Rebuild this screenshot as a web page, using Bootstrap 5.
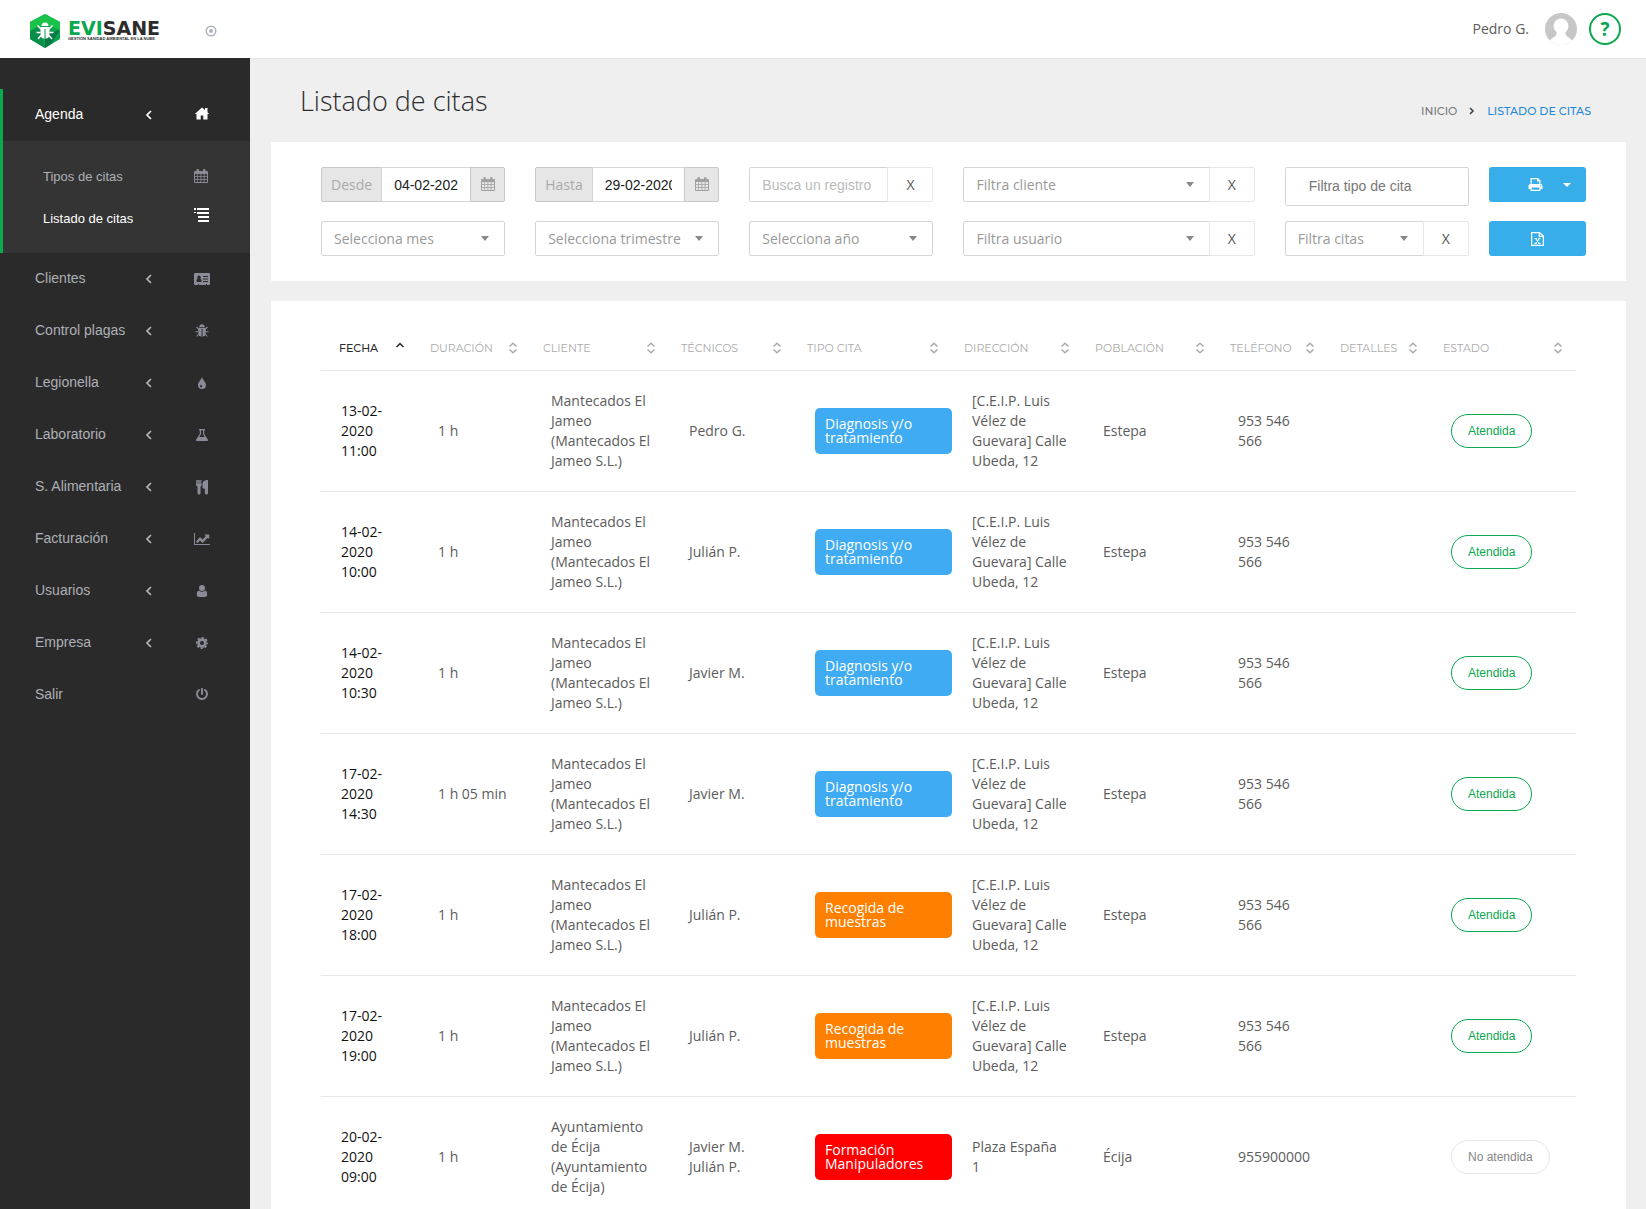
<!DOCTYPE html>
<html lang="es">
<head>
<meta charset="utf-8">
<meta name="viewport" content="width=device-width, initial-scale=1">
<title>Evisane - Listado de citas</title>
<link href="https://cdn.jsdelivr.net/npm/bootstrap@5.3.0/dist/css/bootstrap.min.css" rel="stylesheet">
<style>
body{font-family:"Segoe UI","Open Sans","Noto Sans",sans-serif;font-size:14px;line-height:20px;color:#5c5c5c;background:#efefef}
svg{display:block;flex:none}
.ev-top{height:58px;padding:0 25px 0 30px}
.ev-brand{width:147px;color:#2c2c2c}
.ev-name{font:bold 19px/16px "DejaVu Sans",sans-serif}
.ev-name span{color:#0aa84f}
.ev-tag{font:bold 4px/6px "Liberation Sans",sans-serif}
.ev-help{width:32px;height:32px;border:2px solid #0aa84f;color:#0aa84f;margin-left:12px;font:bold 19px/28px "Open Sans",sans-serif}
.ev-side{width:250px;background:#2a2a2a;padding-top:31px;font-family:"Liberation Sans",Arial,sans-serif}
.ev-side a{height:52px;padding:0 33px 0 35px;color:#adb0b6;text-decoration:none}
.ev-side a>span{padding-bottom:2px}
.ev-side a>svg{color:#8b8b97}
.ev-side a>.ev-chev{color:#b4b6bb;margin-right:33px}
.ev-side .ev-open{box-shadow:inset 3px 0 #0aa84f}
.ev-side .ev-sub{background:#343434;padding:14px 0;margin-left:3px}
.ev-side .ev-sub a{height:42px;font-size:13px;padding-left:40px}
.ev-side .ev-sub a>span{padding:2px 0 0}
.ev-side a.ev-on,.ev-side a.ev-on>svg{color:#fff}
.ev-main{padding:0 20px 0 21px;border-top:1px solid #e6e6e6}
.ev-head{height:83px;padding:0 35px 0 29px}
.ev-head h1{font-size:27px;font-weight:300;line-height:36px;color:#2c2c2c}
.ev-crumbs{font:500 11px/16px Montserrat,Inter,sans-serif;padding-top:20px}
.ev-crumbs a{color:#777;text-decoration:none}
.ev-crumbs .ev-here{color:#1e88d6}
.ev-panel{padding:25px 50px}
.ev-panel+.ev-panel{margin-top:20px}
.ev-filters{--bs-gutter-x:30px;--bs-gutter-y:15px}
.ev-filters>.ev-tight{padding:0 5px}
.ev-filters .form-control,.ev-filters .form-select,.ev-filters .input-group-text,.ev-filters .btn{height:35px;font-size:14px;line-height:20px;border-radius:2px;box-shadow:none}
.ev-filters .form-control{padding:0 12px;border-color:#d5d5d5;color:#222;font-family:"Liberation Sans",Arial,sans-serif}
.ev-filters .form-control::placeholder{color:#bbb}
.ev-filters .ev-tall{height:39px;padding:0 23px 2px}
.ev-filters .ev-tall::placeholder{color:#777}
.ev-filters .form-select{padding:0 30px 0 12px;border-color:#d5d5d5;color:#999;background:#fff url("data:image/svg+xml,%3Csvg xmlns='http://www.w3.org/2000/svg' width='8' height='5'%3E%3Cpath d='M0 0h8L4 5z' fill='%23888'/%3E%3C/svg%3E") no-repeat right 15px center/8px 5px}
.ev-filters .input-group-text{background:#e6e6e6;border-color:#c8c8c8;color:#aaa;padding:0 9px}
.ev-filters .ev-cal{width:35px;padding:0;border:1px solid #c8c8c8;background:#e6e6e6;color:#a0a0a0}
.ev-filters .ev-clear{width:46px;padding:0;border:1px solid #e6e6e6;background:#fff;color:#555}
.ev-filters .ev-blue{background:#37aeea;border:0;color:#fff;border-radius:3px}
.ev-table{table-layout:fixed;border-collapse:separate;border-spacing:0}
.ev-table th{height:45px;padding:0 7px 0 18px;border-bottom:1px solid #e6e6e6;font:400 11px/16px Montserrat,Inter,sans-serif;color:#aaa;vertical-align:middle}
.ev-table th:last-child{padding-right:13px}
.ev-table th.ev-sorted{color:#2c2c2c;font-weight:500}
.ev-table td{height:121px;padding:20px 6px 20px 26px;border-bottom:1px solid #e6e6e6;vertical-align:middle}
.ev-table td:first-child{padding-left:20px;color:#111}
.ev-kind{width:137px;padding:9px 10px;border-radius:5px;line-height:14px;color:#fff;font-weight:500}
.ev-diag{background:#3fabf3}.ev-samp{background:#ff8000}.ev-form{background:#f00}
.ev-table .ev-state{height:34px;padding:0 16px;border-radius:17px;font:12px/18px "Liberation Sans",Arial,sans-serif;border:1px solid #0aa84f;color:#0aa84f;background:#fff}
.ev-table .ev-pending{border-color:#e6e6e6;color:#888}
</style>
<script src="https://cdn.jsdelivr.net/npm/bootstrap@5.3.0/dist/js/bootstrap.bundle.min.js"></script>
</head>
<body class="vh-100 overflow-hidden d-flex flex-column">
<svg width="0" height="0" class="position-absolute" aria-hidden="true">
  <symbol id="chev" viewBox="0 0 10 12"><path d="M7 2 3 6l4 4" fill="none" stroke="currentColor" stroke-width="1.7"/></symbol>
  <symbol id="sort" viewBox="0 0 10 12"><path d="M1.500 4.500 5 1.200l3.500 3.300M1.500 7.500 5 10.800l3.500-3.300" fill="none" stroke="#aaa" stroke-width="1.500"/></symbol>
  <symbol id="cal" viewBox="0 0 14 15"><path fill="currentColor" fill-rule="evenodd" d="M1 2h1.500V1a1 1 0 0 1 1-1h.5a1 1 0 0 1 1 1v1h4V1a1 1 0 0 1 1-1h.5a1 1 0 0 1 1 1v1H13a1 1 0 0 1 1 1v10a1 1 0 0 1-1 1H1a1 1 0 0 1-1-1V3a1 1 0 0 1 1-1zM1 5v2h2.300V5zm3 0v2h2.500V5zm3.300 0v2h2.400V5zm3.200 0v2H13V5zM1 7.700V10h2.300V7.700zm3 0V10h2.500V7.700zm3.300 0V10h2.400V7.700zm3.200 0V10H13V7.700zM1 10.700V13h2.300v-2.300zm3 0V13h2.500v-2.300zm3.300 0V13h2.400v-2.300zm3.200 0V13H13v-2.300z"/></symbol>
  <symbol id="bug" viewBox="0 0 14 14"><path fill="currentColor" d="M4.300 3a2.700 2.700 0 0 1 5.400 0z"/><path fill="currentColor" d="M3.300 3.700h7.400v5.300a3.500 3.500 0 0 1-3.200 3.700V5h-1v7.700A3.500 3.500 0 0 1 3.300 9z"/><path stroke="currentColor" stroke-width="1.100" fill="none" d="M4 5.500 1.500 3M10 5.500 12.500 3M3.500 7.800H.5M10.500 7.800h3M4 10l-2.300 2.500M10 10l2.300 2.500"/></symbol>
</svg>

<header class="ev-top bg-white d-flex align-items-center flex-shrink-0">
  <a class="ev-brand d-flex align-items-center gap-2 pt-1 text-decoration-none" href="#">
    <svg width="30" height="34" viewBox="0 0 30 34"><path d="M15 0 30 8v17L15 34 0 25V8z" fill="#0ba34b"/><path d="M15 0 30 8v8L15 10 0 17V8z" fill="#19c34a"/><path d="m30 16-9 14-6 4V20z" fill="#067a45"/><path d="M0 17l9-5 6 22L0 25z" fill="#0b8d4b"/><g fill="#fff"><path d="M11.500 12a3.500 3.500 0 0 1 7 0z"/><path d="M10.500 13h9v7a4.500 4.500 0 0 1-4 4.700V15h-1v9.700a4.500 4.500 0 0 1-4-4.700z"/></g><path d="m11 15-3.500-3.500M19 15l3.500-3.500M10.500 18.500H6.500M19.500 18.500h4M11 21.500 8 25M19 21.500l3 3.500" stroke="#fff" stroke-width="1.500"/></svg>
    <span class="d-flex flex-column text-nowrap"><span class="ev-name"><span>EVI</span>SANE</span><small class="ev-tag">GESTIÓN SANIDAD AMBIENTAL EN LA NUBE</small></span>
  </a>
  <button class="btn p-0 pt-1 border-0 ms-4 ps-1" type="button" aria-label="Fijar menú"><svg width="12" height="12" viewBox="0 0 12 12"><circle cx="6" cy="6" r="4.800" fill="none" stroke="#aeb0bd" stroke-width="1.400"/><circle cx="6" cy="6" r="2" fill="#aeb0bd"/></svg></button>
  <span class="ms-auto me-3">Pedro G.</span>
  <svg width="32" height="32" viewBox="0 0 32 32"><clipPath id="av"><circle cx="16" cy="16" r="16"/></clipPath><g clip-path="url(#av)"><path fill="#c7c7c7" d="M0 0h32v32H0z"/><circle cx="16" cy="13" r="7.500" fill="#fff"/><path fill="#fff" d="M4 29c2-4 6-5 7.500-7.500V17h9v4.500C22 24 26 25 28 29v3H4z"/></g></svg>
  <button class="ev-help btn rounded-circle p-0" type="button" aria-label="Ayuda">?</button>
</header>

<div class="d-flex flex-grow-1 overflow-hidden">
  <nav class="ev-side flex-shrink-0">
    <div class="ev-open">
      <a href="#" class="ev-on d-flex align-items-center"><span class="flex-grow-1">Agenda</span><svg class="ev-chev text-white" width="10" height="12"><use href="#chev"/></svg><svg width="30" height="16" viewBox="-8 1 30 16"><path fill="currentColor" d="M7 1.500 10 4V2h2.500v4.200L14.200 8H12.500v5.500H8.300V9.500H5.700v4H1.500V8H-.2z"/></svg></a>
      <div class="ev-sub">
        <a href="#" class="d-flex align-items-center"><span class="flex-grow-1">Tipos de citas</span><svg width="30" height="15" viewBox="-7 0 30 15"><use href="#cal" width="14" height="15"/></svg></a>
        <a href="#" class="ev-on d-flex align-items-center"><span class="flex-grow-1">Listado de citas</span><svg width="30" height="20" viewBox="-7 0 30 20"><path fill="currentColor" d="M0 0h2v2H0zm3 0h12v2H3zM3 4h12v2H3zM4 8h11v2H4zM4 12h11v2H4zM0 4h2v1H0z"/></svg></a>
      </div>
    </div>
    <a href="#" class="d-flex align-items-center"><span class="flex-grow-1">Clientes</span><svg class="ev-chev" width="10" height="12"><use href="#chev"/></svg><svg width="30" height="14" viewBox="-7 0 30 14"><path fill="currentColor" fill-rule="evenodd" d="M1 1h14a1 1 0 0 1 1 1v10a1 1 0 0 1-1 1h-2v-1h-1v1H5v-1H4v1H1a1 1 0 0 1-1-1V2a1 1 0 0 1 1-1zm1.500 9h5V8.500c0-1-.8-1.700-1.300-1.700a1.800 1.800 0 1 0-2.400 0c-.5 0-1.300.7-1.300 1.700zM9 4v1h5V4zm0 2.500v1h5v-1zM9 9v1h5V9z"/></svg></a>
    <a href="#" class="d-flex align-items-center"><span class="flex-grow-1">Control plagas</span><svg class="ev-chev" width="10" height="12"><use href="#chev"/></svg><svg width="30" height="14" viewBox="-8 0 30 14"><use href="#bug" width="14" height="14"/></svg></a>
    <a href="#" class="d-flex align-items-center"><span class="flex-grow-1">Legionella</span><svg class="ev-chev" width="10" height="12"><use href="#chev"/></svg><svg width="30" height="14" viewBox="-8 0 30 14"><path fill="currentColor" fill-rule="evenodd" d="M7 1c.7 3 4 5 4 8a4 4 0 0 1-8 0c0-3 3.300-5 4-8zM6 8.500c-.3.800-1 1.200-1 1.800a1.100 1.100 0 0 0 2.200 0c0-.6-.9-1-1.200-1.800z"/></svg></a>
    <a href="#" class="d-flex align-items-center"><span class="flex-grow-1">Laboratorio</span><svg class="ev-chev" width="10" height="12"><use href="#chev"/></svg><svg width="30" height="14" viewBox="-8 0 30 14"><path fill="currentColor" fill-rule="evenodd" d="M4 1h6v1.200H9.200V6L12.800 11.500c.5.900.1 1.500-.8 1.500H2c-.9 0-1.300-.6-.8-1.500L4.800 6V2.200H4zm2 1.200v4L4.300 9h5.400L8 6.200v-4z"/></svg></a>
    <a href="#" class="d-flex align-items-center"><span class="flex-grow-1">S. Alimentaria</span><svg class="ev-chev" width="10" height="12"><use href="#chev"/></svg><svg width="30" height="16" viewBox="-8 0 30 16"><path fill="currentColor" opacity=".75" d="M1 1h5.500v5H1z"/><path fill="currentColor" d="M1 5h5.500v1c0 .8-.6 1.200-1 1.500V14a1 1 0 0 1-3 0V7.500C2 7 1 6.500 1 6zM13 1v13a1 1 0 0 1-3.200 0V9.500H7.500V5c0-2.500 2-4 5.500-4z"/></svg></a>
    <a href="#" class="d-flex align-items-center"><span class="flex-grow-1">Facturación</span><svg class="ev-chev" width="10" height="12"><use href="#chev"/></svg><svg width="30" height="14" viewBox="-7 0 30 14"><path fill="currentColor" d="M0 1h1v11h15v1H0zM2 9.500 6 5l2.500 2.500 3.300-3.300L10.500 2.500h4.700v4.500l-1.500-1.300L8.500 11 6 8.500l-2.500 2.700z"/></svg></a>
    <a href="#" class="d-flex align-items-center"><span class="flex-grow-1">Usuarios</span><svg class="ev-chev" width="10" height="12"><use href="#chev"/></svg><svg width="30" height="14" viewBox="-8 0 30 14"><circle cx="7" cy="4" r="3" fill="currentColor"/><path fill="currentColor" d="M4 6.500c.8.800 1.800 1.200 3 1.200s2.200-.4 3-1.200c1.500.2 2.200 2 2.200 4 0 1.500-.8 2.500-2 2.500H3.800c-1.200 0-2-1-2-2.500 0-2 .7-3.800 2.200-4z"/></svg></a>
    <a href="#" class="d-flex align-items-center"><span class="flex-grow-1">Empresa</span><svg class="ev-chev" width="10" height="12"><use href="#chev"/></svg><svg width="30" height="14" viewBox="-8 0 30 14"><circle cx="7" cy="7" r="3.400" fill="none" stroke="currentColor" stroke-width="2.800"/><circle cx="7" cy="7" r="5.200" fill="none" stroke="currentColor" stroke-width="1.800" stroke-dasharray="2.200 1.884" stroke-dashoffset="1.100"/></svg></a>
    <a href="#" class="d-flex align-items-center"><span class="flex-grow-1">Salir</span><svg width="30" height="14" viewBox="-8 1 30 14"><path fill="none" stroke="currentColor" stroke-width="1.900" stroke-linecap="round" d="M7 1.800V7M4 3a5 5 0 1 0 6 0"/></svg></a>
  </nav>

  <main class="ev-main flex-grow-1">
    <div class="ev-head d-flex justify-content-between align-items-center">
      <h1 class="m-0">Listado de citas</h1>
      <nav class="ev-crumbs d-flex align-items-center gap-2" aria-label="Ruta"><a href="#">INICIO</a><svg class="mx-1" width="6" height="8" viewBox="0 0 6 8"><path d="m1 1 3 3-3 3" fill="none" stroke="#444" stroke-width="1.600"/></svg><a class="ev-here" href="#">LISTADO DE CITAS</a></nav>
    </div>

    <section class="ev-panel bg-white">
      <form class="ev-filters row align-items-start">
        <div class="col-2"><div class="input-group flex-nowrap"><label class="input-group-text" for="desde">Desde</label><input class="form-control" id="desde" value="04-02-2020"><button class="ev-cal btn d-flex align-items-center justify-content-center" type="button" aria-label="Calendario desde"><svg width="14" height="15"><use href="#cal"/></svg></button></div></div>
        <div class="col-2"><div class="input-group flex-nowrap"><label class="input-group-text" for="hasta">Hasta</label><input class="form-control" id="hasta" value="29-02-2020"><button class="ev-cal btn d-flex align-items-center justify-content-center" type="button" aria-label="Calendario hasta"><svg width="14" height="15"><use href="#cal"/></svg></button></div></div>
        <div class="col-2"><div class="input-group flex-nowrap"><input class="form-control" placeholder="Busca un registro" aria-label="Busca un registro"><button class="ev-clear btn" type="button">X</button></div></div>
        <div class="col-3"><div class="input-group flex-nowrap"><select class="form-select" aria-label="Cliente"><option>Filtra cliente</option></select><button class="ev-clear btn" type="button">X</button></div></div>
        <div class="col-2"><input class="ev-tall form-control" placeholder="Filtra tipo de cita" aria-label="Filtra tipo de cita"></div>
        <div class="ev-tight col-1"><button class="ev-blue btn w-100 d-flex align-items-center justify-content-center gap-3" type="button" aria-label="Imprimir"><svg class="ms-4" width="15" height="13" viewBox="0 0 14 13"><path fill="#fff" fill-rule="evenodd" d="M2 0h7.500L12 2.500V6a2 2 0 0 1 2 2v3h-2v2H2v-2H0V8a2 2 0 0 1 2-2zm1.200 1.200V6h7.600V3.500H8.500V1.200zM3.200 9.500v2.300h7.600V9.500zM12 7.300a.6.600 0 1 0 .1 0z"/></svg><svg class="ms-1" width="8" height="4" viewBox="0 0 8 4"><path d="M0 0h8L4 4z" fill="#fff"/></svg></button></div>
        <div class="col-2"><select class="form-select" aria-label="Mes"><option>Selecciona mes</option></select></div>
        <div class="col-2"><select class="form-select" aria-label="Trimestre"><option>Selecciona trimestre</option></select></div>
        <div class="col-2"><select class="form-select" aria-label="Año"><option>Selecciona año</option></select></div>
        <div class="col-3"><div class="input-group flex-nowrap"><select class="form-select" aria-label="Usuario"><option>Filtra usuario</option></select><button class="ev-clear btn" type="button">X</button></div></div>
        <div class="col-2"><div class="input-group flex-nowrap"><select class="form-select" aria-label="Citas"><option>Filtra citas</option></select><button class="ev-clear btn" type="button">X</button></div></div>
        <div class="ev-tight col-1"><button class="ev-blue btn w-100 d-flex align-items-center justify-content-center" type="button" aria-label="Exportar a Excel"><svg width="13" height="14" viewBox="0 0 13 14"><path d="M.6.600h7.900l3.900 3.500v9.300H.6zM8.300.6v3.700h4" fill="none" stroke="#fff" stroke-width="1.200"/><path d="m4.500 6.500 4 5M8.500 6.500l-4 5M3.500 6.500h2.300M7.200 6.500h2.300M3.500 11.500h2.300M7.200 11.500h2.300" stroke="#fff" stroke-width="1.100"/></svg></button></div>
      </form>
    </section>

    <section class="ev-panel bg-white">
      <table class="ev-table w-100">
        <colgroup><col width="91"><col width="113"><col width="138"><col width="126"><col width="157"><col width="131"><col width="135"><col width="110"><col width="103"><col width="151"></colgroup>
        <thead><tr>
          <th class="ev-sorted"><div class="d-flex justify-content-between align-items-center">FECHA<svg width="10" height="12" viewBox="0 0 10 12"><path d="M1.500 5 5 1.700 8.500 5" fill="none" stroke="#333" stroke-width="1.600"/></svg></div></th>
          <th><div class="d-flex justify-content-between align-items-center">DURACIÓN<svg width="10" height="12"><use href="#sort"/></svg></div></th>
          <th><div class="d-flex justify-content-between align-items-center">CLIENTE<svg width="10" height="12"><use href="#sort"/></svg></div></th>
          <th><div class="d-flex justify-content-between align-items-center">TÉCNICOS<svg width="10" height="12"><use href="#sort"/></svg></div></th>
          <th><div class="d-flex justify-content-between align-items-center">TIPO CITA<svg width="10" height="12"><use href="#sort"/></svg></div></th>
          <th><div class="d-flex justify-content-between align-items-center">DIRECCIÓN<svg width="10" height="12"><use href="#sort"/></svg></div></th>
          <th><div class="d-flex justify-content-between align-items-center">POBLACIÓN<svg width="10" height="12"><use href="#sort"/></svg></div></th>
          <th><div class="d-flex justify-content-between align-items-center">TELÉFONO<svg width="10" height="12"><use href="#sort"/></svg></div></th>
          <th><div class="d-flex justify-content-between align-items-center">DETALLES<svg width="10" height="12"><use href="#sort"/></svg></div></th>
          <th><div class="d-flex justify-content-between align-items-center">ESTADO<svg width="10" height="12"><use href="#sort"/></svg></div></th>
        </tr></thead>
        <tbody>
          <tr><td>13-02-<br>2020<br>11:00</td><td>1 h</td><td>Mantecados El Jameo (Mantecados El Jameo S.L.)</td><td>Pedro G.</td><td><div class="ev-kind ev-diag">Diagnosis y/o<br>tratamiento</div></td><td>[C.E.I.P. Luis<br>Vélez de Guevara] Calle Ubeda, 12</td><td>Estepa</td><td>953 546<br>566</td><td></td><td><button class="ev-state btn" type="button">Atendida</button></td></tr>
          <tr><td>14-02-<br>2020<br>10:00</td><td>1 h</td><td>Mantecados El Jameo (Mantecados El Jameo S.L.)</td><td>Julián P.</td><td><div class="ev-kind ev-diag">Diagnosis y/o<br>tratamiento</div></td><td>[C.E.I.P. Luis<br>Vélez de Guevara] Calle Ubeda, 12</td><td>Estepa</td><td>953 546<br>566</td><td></td><td><button class="ev-state btn" type="button">Atendida</button></td></tr>
          <tr><td>14-02-<br>2020<br>10:30</td><td>1 h</td><td>Mantecados El Jameo (Mantecados El Jameo S.L.)</td><td>Javier M.</td><td><div class="ev-kind ev-diag">Diagnosis y/o<br>tratamiento</div></td><td>[C.E.I.P. Luis<br>Vélez de Guevara] Calle Ubeda, 12</td><td>Estepa</td><td>953 546<br>566</td><td></td><td><button class="ev-state btn" type="button">Atendida</button></td></tr>
          <tr><td>17-02-<br>2020<br>14:30</td><td>1 h 05 min</td><td>Mantecados El Jameo (Mantecados El Jameo S.L.)</td><td>Javier M.</td><td><div class="ev-kind ev-diag">Diagnosis y/o<br>tratamiento</div></td><td>[C.E.I.P. Luis<br>Vélez de Guevara] Calle Ubeda, 12</td><td>Estepa</td><td>953 546<br>566</td><td></td><td><button class="ev-state btn" type="button">Atendida</button></td></tr>
          <tr><td>17-02-<br>2020<br>18:00</td><td>1 h</td><td>Mantecados El Jameo (Mantecados El Jameo S.L.)</td><td>Julián P.</td><td><div class="ev-kind ev-samp">Recogida de<br>muestras</div></td><td>[C.E.I.P. Luis<br>Vélez de Guevara] Calle Ubeda, 12</td><td>Estepa</td><td>953 546<br>566</td><td></td><td><button class="ev-state btn" type="button">Atendida</button></td></tr>
          <tr><td>17-02-<br>2020<br>19:00</td><td>1 h</td><td>Mantecados El Jameo (Mantecados El Jameo S.L.)</td><td>Julián P.</td><td><div class="ev-kind ev-samp">Recogida de<br>muestras</div></td><td>[C.E.I.P. Luis<br>Vélez de Guevara] Calle Ubeda, 12</td><td>Estepa</td><td>953 546<br>566</td><td></td><td><button class="ev-state btn" type="button">Atendida</button></td></tr>
          <tr><td>20-02-<br>2020<br>09:00</td><td>1 h</td><td>Ayuntamiento de Écija (Ayuntamiento de Écija)</td><td>Javier M.<br>Julián P.</td><td><div class="ev-kind ev-form">Formación<br>Manipuladores</div></td><td>Plaza España<br>1</td><td>Écija</td><td>955900000</td><td></td><td><button class="ev-state ev-pending btn" type="button">No atendida</button></td></tr>
        </tbody>
      </table>
    </section>
  </main>
</div>
</body>
</html>
